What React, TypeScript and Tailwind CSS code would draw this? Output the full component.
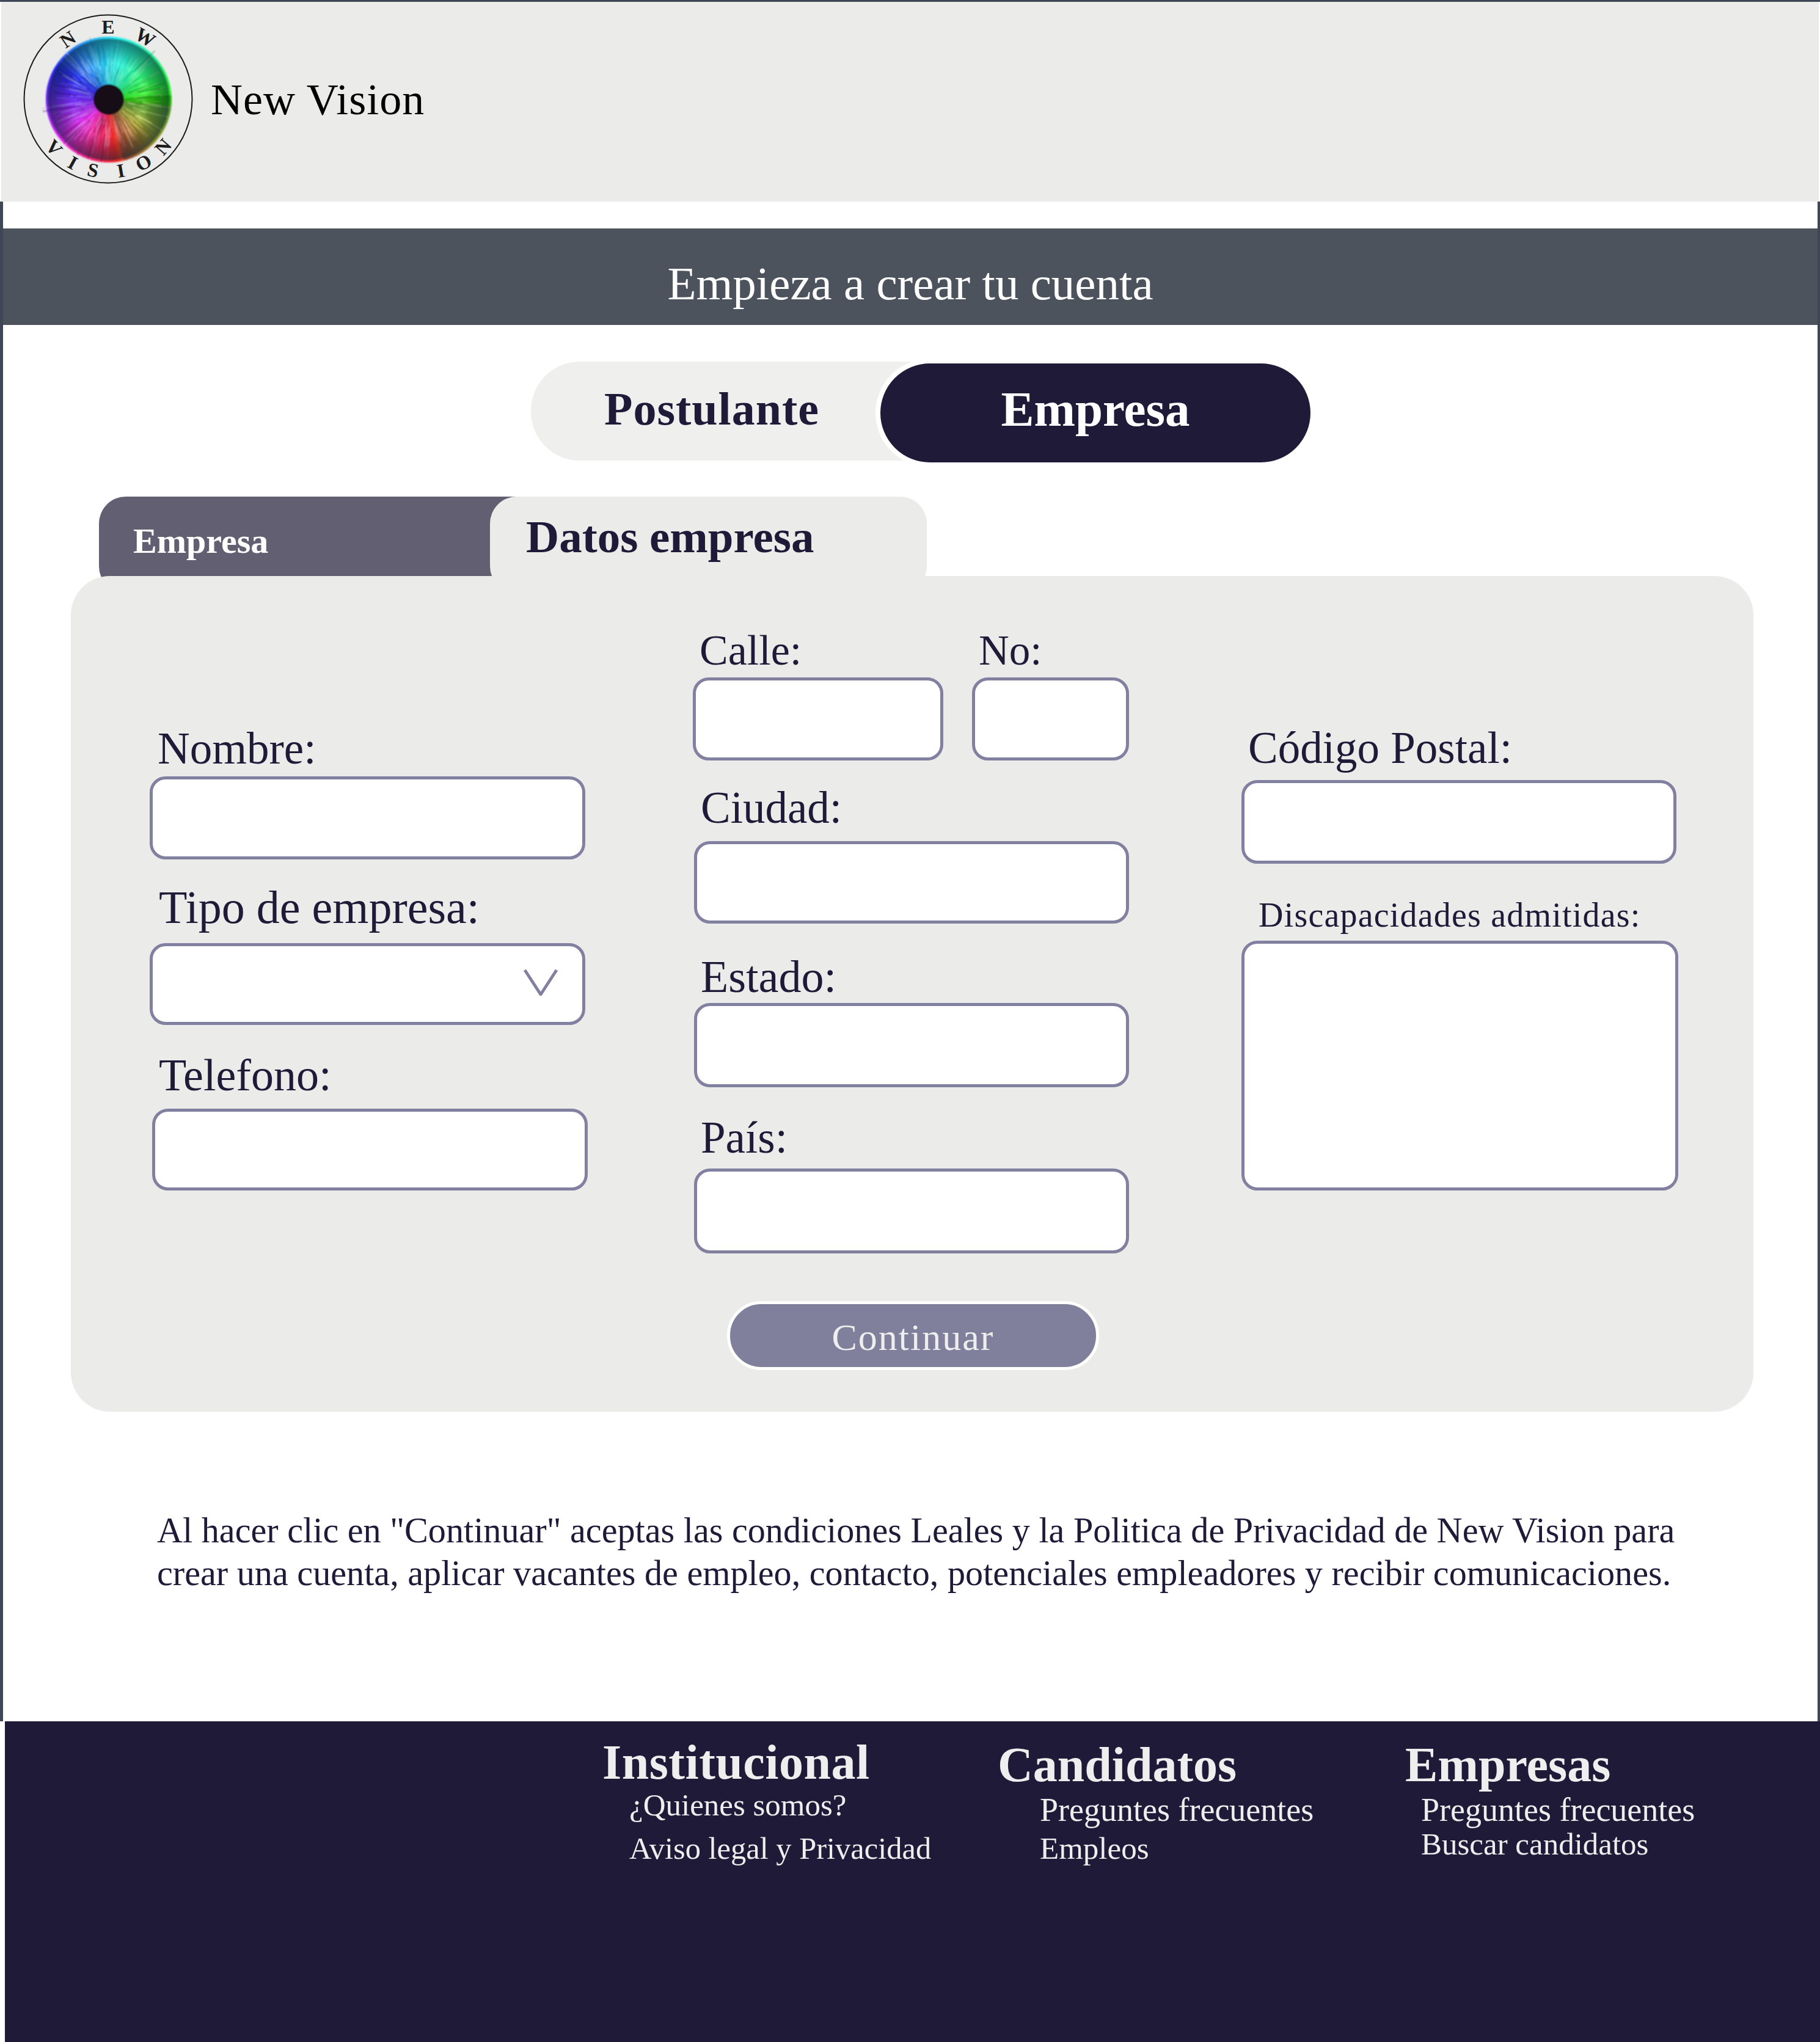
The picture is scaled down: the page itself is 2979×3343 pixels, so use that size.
import React from 'react';

// iris hue per 30deg, clockwise from the top
const HUES = [185, 165, 140, 110, 75, 30, -10, -40, -75, -100, -120, -150, -175];

const hueAt = (deg: number) => {
  const p = (deg % 360) / 30;
  const i = Math.floor(p);
  return HUES[i] + (HUES[i + 1] - HUES[i]) * (p - i);
};

const point = (cx: number, cy: number, r: number, deg: number) => {
  const a = ((deg - 90) * Math.PI) / 180;
  return [cx + r * Math.cos(a), cy + r * Math.sin(a)];
};

const satAt = (deg: number) => (deg > 95 && deg < 165 ? 50 : 90);
const lightAt = (deg: number) => (deg > 85 && deg < 165 ? 40 : 56);

const WEDGES = Array.from({ length: 180 }, (_, i) => {
  const deg = i * 2;
  const [x1, y1] = point(158, 153, 103, deg);
  const [x2, y2] = point(158, 153, 103, deg + 2.6);
  return {
    d: `M158 153L${x1} ${y1}A103 103 0 0 1 ${x2} ${y2}Z`,
    fill: `hsl(${hueAt(deg)} ${satAt(deg)}% ${lightAt(deg)}%)`,
  };
});

// small seeded generator so that the fibres stay the same on every load
let seed = 7;
const rnd = () => {
  seed = (seed * 16807) % 2147483647;
  return seed / 2147483647;
};

const FIBRES = Array.from({ length: 340 }, () => {
  const deg = rnd() * 360;
  const r1 = 26 + rnd() * 35;
  const r2 = r1 + 12 + rnd() * 38;
  const [x1, y1] = point(158, 153, r1, deg);
  const [x2, y2] = point(158, 153, r2, deg + (rnd() - 0.5) * 6);
  const light = rnd() > 0.3;
  return {
    x1,
    y1,
    x2,
    y2,
    stroke: light ? `hsl(${hueAt(deg) - 10} 95% 78%)` : `hsl(${hueAt(deg)} 80% 30%)`,
    opacity: 0.2 + rnd() * 0.4,
    width: 0.8 + rnd() * 1.5,
  };
});

const TOP_LETTERS: [string, number][] = [
  ['N', -34],
  ['E', 0],
  ['W', 31],
];

const BOTTOM_LETTERS: [string, number][] = [
  ['V', -48],
  ['I', -29],
  ['S', -12],
  ['I', 10],
  ['O', 29],
  ['N', 49],
];

const Logo = () => (
  <svg viewBox="0 0 320 320" className="w-[320px] h-[320px] shrink-0">
    <defs>
      <radialGradient id="shade">
        <stop offset="0.24" stopColor="#000" stopOpacity="0.12" />
        <stop offset="0.6" stopColor="#000" stopOpacity="0" />
        <stop offset="0.97" stopColor="#03202c" stopOpacity="0.55" />
        <stop offset="1" stopColor="#000" stopOpacity="0" />
      </radialGradient>
      <filter id="soft">
        <feGaussianBlur stdDeviation="1" />
      </filter>
    </defs>
    <circle cx="157" cy="152" r="137.5" fill="none" stroke="#1c1c1c" strokeWidth="2" />
    <g filter="url(#soft)">
      {WEDGES.map((w, i) => (
        <path key={i} d={w.d} fill={w.fill} />
      ))}
      {FIBRES.map((f, i) => (
        <line
          key={i}
          x1={f.x1}
          y1={f.y1}
          x2={f.x2}
          y2={f.y2}
          stroke={f.stroke}
          strokeOpacity={f.opacity}
          strokeWidth={f.width}
        />
      ))}
      <circle cx="158" cy="153" r="101" fill="url(#shade)" />
      <circle cx="158" cy="153" r="25" fill="#120d14" />
    </g>
    <g fontFamily="'Liberation Serif', serif" fontSize="32" fontWeight="700" fill="#1c1c1c" textAnchor="middle">
      {TOP_LETTERS.map(([letter, deg]) => (
        <text key={deg} x="157" y="45" transform={`rotate(${deg} 157 152)`}>
          {letter}
        </text>
      ))}
      {BOTTOM_LETTERS.map(([letter, deg]) => (
        <text key={deg} x="157" y="282" transform={`rotate(${-deg} 157 152)`}>
          {letter}
        </text>
      ))}
    </g>
  </svg>
);

const inputBase = 'block bg-white border-[5px] border-[#8280a0] rounded-[26px] outline-none';
const labelBase = 'block leading-[68px] text-[#1e1a38]';

const FooterLink = ({ className, children }: { className: string; children: React.ReactNode }) => (
  <a className={`block leading-[54px] text-[#eeeeee] whitespace-nowrap ${className}`}>{children}</a>
);

const App: React.FC = () => {
  return (
    <div className="w-[2979px] h-[3343px] flex flex-col bg-white border-t-[3px] border-[#3f4655] font-['Liberation_Serif',serif]">
      {/* Header */}
      <header className="h-[327px] shrink-0 flex items-start bg-[#ebebe9] mx-[2px] pl-[18px] pt-[7px]">
        <Logo />
        <span className="ml-[5px] mt-[117px] text-[72px] leading-none text-black tracking-[1px]">New Vision</span>
      </header>

      <main className="flex-1 flex flex-col border-l-[5px] border-r-[4px] border-[#3f4655]">
        <div className="mt-[44px] h-[158px] shrink-0 flex items-center justify-center bg-[#4d535c]">
          <h1 className="mt-[22px] text-[77px] leading-none font-normal text-white">Empieza a crear tu cuenta</h1>
        </div>

        {/* Postulante / Empresa */}
        <div className="mt-[60px] ml-[864px] flex items-start">
          <button className="w-[640px] h-[162px] pr-[48px] pb-[8px] flex items-center justify-center rounded-l-[80px] bg-[#efefed] text-[76px] font-bold tracking-[1px] text-[#1e1a38]">
            Postulante
          </button>
          <button className="-ml-[76px] -mt-[5px] w-[720px] h-[178px] pb-[10px] flex items-center justify-center rounded-[89px] border-[8px] border-white bg-[#1e1a38] text-[81px] font-bold text-white">
            Empresa
          </button>
        </div>

        {/* Tabs */}
        <div className="mt-[48px] ml-[157px] flex items-start h-[130px] shrink-0">
          <div className="w-[720px] h-[158px] pl-[56px] pt-[44px] rounded-[44px] bg-[#625f73] text-[58px] leading-none font-bold text-white">
            Empresa
          </div>
          <div className="-ml-[80px] w-[715px] h-[158px] pl-[59px] pt-[28px] rounded-[44px] bg-[#ebebe9] text-[75px] leading-none font-bold text-[#1e1a38]">
            Datos empresa
          </div>
        </div>

        {/* Form */}
        <section className="ml-[111px] w-[2754px] h-[1368px] shrink-0 flex flex-col rounded-[64px] bg-[#ebebe9]">
          <div className="h-[1109px] flex items-start">
            <div className="ml-[129px] w-[720px] pt-[249px]">
              <label className={`${labelBase} text-[73px] ml-[13px] mb-[11px]`}>Nombre:</label>
              <input className={`${inputBase} w-[713px] h-[136px]`} />
              <label className={`${labelBase} text-[76px] ml-[15px] mt-[44px] mb-[25px]`}>Tipo de empresa:</label>
              <div className={`${inputBase} w-[713px] h-[134px] flex items-center justify-end pr-[40px]`}>
                <svg viewBox="0 0 56 44" className="w-[56px] h-[44px] mb-[6px]" fill="none" stroke="#8280a0" strokeWidth="5">
                  <path d="M2 2L28 42L54 2" />
                </svg>
              </div>
              <label className={`${labelBase} text-[74px] ml-[15px] mt-[48px] mb-[21px]`}>Telefono:</label>
              <input className={`${inputBase} ml-[4px] w-[713px] h-[134px]`} />
            </div>

            <div className="ml-[169px] w-[714px] pt-[88px]">
              <div className="flex items-start">
                <div>
                  <label className={`${labelBase} text-[70px] ml-[11px] mb-[10px]`}>Calle:</label>
                  <input className={`${inputBase} w-[410px] h-[136px]`} />
                </div>
                <div className="ml-[47px]">
                  <label className={`${labelBase} text-[69px] ml-[11px] mb-[10px]`}>No:</label>
                  <input className={`${inputBase} w-[257px] h-[136px]`} />
                </div>
              </div>
              <label className={`${labelBase} text-[73px] ml-[13px] mt-[44px] mb-[20px]`}>Ciudad:</label>
              <input className={`${inputBase} ml-[2px] w-[712px] h-[135px]`} />
              <label className={`${labelBase} text-[74px] ml-[13px] mt-[53px] mb-[9px]`}>Estado:</label>
              <input className={`${inputBase} ml-[2px] w-[712px] h-[138px]`} />
              <label className={`${labelBase} text-[73px] ml-[13px] mt-[49px] mb-[16px]`}>País:</label>
              <input className={`${inputBase} ml-[2px] w-[712px] h-[139px]`} />
            </div>

            <div className="ml-[184px] w-[716px] pt-[248px]">
              <label className={`${labelBase} text-[73px] ml-[11px] mb-[18px]`}>Código Postal:</label>
              <input className={`${inputBase} w-[712px] h-[137px]`} />
              <label className="ml-[28px] mt-[56px] mb-[14px] block text-[56px] leading-none tracking-[1.2px] text-[#1e1a38]">Discapacidades admitidas:</label>
              <textarea className={`${inputBase} w-[715px] h-[409px] resize-none`} />
            </div>
          </div>

          <button className="ml-[1074px] mt-[78px] w-[609px] h-[113px] pt-[6px] rounded-[56px] border-[5px] border-white bg-[#807f9c] text-[62px] tracking-[2px] text-[#eeeeee]">
            Continuar
          </button>
        </section>

        <p className="mt-[160px] ml-[252px] text-[58.2px] leading-[70px] whitespace-nowrap text-[#1e1a38]">
          Al hacer clic en "Continuar" aceptas las condiciones Leales y la Politica de Privacidad de New Vision para<br />
          crear una cuenta, aplicar vacantes de empleo, contacto, potenciales empleadores y recibir comunicaciones.
        </p>
      </main>

      {/* Footer */}
      <footer className="h-[525px] shrink-0 ml-[8px] pl-[978px] flex items-start bg-[#1e1a38] text-[#eeeeee]">
        <div className="w-[647px] pt-[27px]">
          <h3 className="text-[80px] leading-none font-bold tracking-[0.5px]">Institucional</h3>
          <FooterLink className="text-[51px] ml-[44px] mt-[3px]">¿Quienes somos?</FooterLink>
          <FooterLink className="text-[50.5px] ml-[44px] mt-[17px]">Aviso legal y Privacidad</FooterLink>
        </div>
        <div className="w-[667px] pt-[31px]">
          <h3 className="text-[80px] leading-none font-bold">Candidatos</h3>
          <FooterLink className="text-[54px] ml-[69px] mt-[7px]">Preguntes frecuentes</FooterLink>
          <FooterLink className="text-[51px] ml-[69px] mt-[9px]">Empleos</FooterLink>
        </div>
        <div className="pt-[31px]">
          <h3 className="text-[80px] leading-none font-bold">Empresas</h3>
          <FooterLink className="text-[54px] ml-[26px] mt-[7px]">Preguntes frecuentes</FooterLink>
          <FooterLink className="text-[51px] ml-[26px] mt-[2px]">Buscar candidatos</FooterLink>
        </div>
      </footer>
    </div>
  );
};

export default App;
